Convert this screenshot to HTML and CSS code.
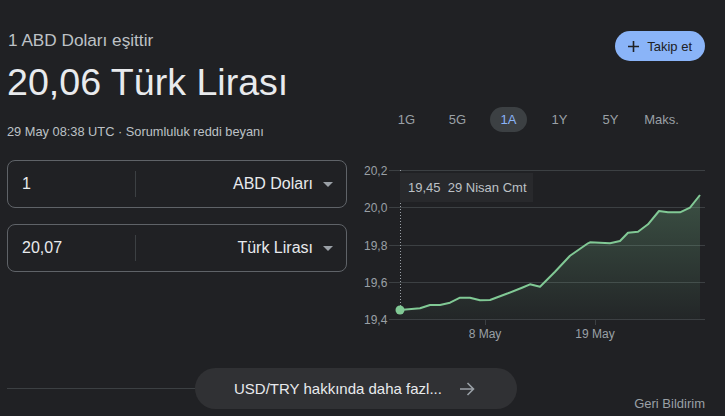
FILE: index.html
```html
<!DOCTYPE html>
<html lang="tr">
<head>
<meta charset="utf-8">
<link rel="stylesheet" href="styles.css">
</head>
<body>
<div class="page">
  <div class="main">
    <div class="left">
      <div class="eq">1 ABD Doları eşittir</div>
      <div class="big">20,06 Türk Lirası</div>
      <div class="date">29 May 08:38 UTC · Sorumluluk reddi beyanı</div>
      <div class="box first">
        <div class="val">1</div>
        <div class="sel"><span>ABD Doları</span><i class="tri"></i></div>
      </div>
      <div class="box">
        <div class="val">20,07</div>
        <div class="sel"><span>Türk Lirası</span><i class="tri"></i></div>
      </div>
    </div>
    <div class="right">
      <button class="follow"><svg width="11" height="11" viewBox="0 0 11 11"><path d="M5.5 0v11M0 5.5h11" stroke="#202124" stroke-width="1.6"/></svg><span>Takip et</span></button>
      <div class="tabs">
        <span class="tab">1G</span>
        <span class="tab">5G</span>
        <span class="tab on"><b>1A</b></span>
        <span class="tab">1Y</span>
        <span class="tab">5Y</span>
        <span class="tab">Maks.</span>
      </div>
      <div class="chart">
        <svg width="370" height="190" viewBox="355 155 370 190">
          <defs>
            <linearGradient id="g" x1="0" y1="195" x2="0" y2="320" gradientUnits="userSpaceOnUse">
              <stop offset="0" stop-color="#81c995" stop-opacity="0.28"/>
              <stop offset="1" stop-color="#81c995" stop-opacity="0.03"/>
            </linearGradient>
          </defs>
          <g stroke="#3c4043" stroke-width="1">
            <line x1="389" y1="170.5" x2="705" y2="170.5"/>
            <line x1="389" y1="207.5" x2="705" y2="207.5"/>
            <line x1="389" y1="245.5" x2="705" y2="245.5"/>
            <line x1="389" y1="282.5" x2="705" y2="282.5"/>
            <line x1="389" y1="319.5" x2="705" y2="319.5"/>
            <line x1="485.5" y1="320" x2="485.5" y2="325"/>
            <line x1="595.5" y1="320" x2="595.5" y2="325"/>
          </g>
          <g class="ylab" fill="#9aa0a6">
            <text x="364" y="174.5">20,2</text>
            <text x="364" y="211.5">20,0</text>
            <text x="364" y="249.5">19,8</text>
            <text x="364" y="286.5">19,6</text>
            <text x="364" y="323.5">19,4</text>
            <text x="485" y="338" text-anchor="middle">8 May</text>
            <text x="595" y="338" text-anchor="middle">19 May</text>
          </g>
          <line x1="400.5" y1="170" x2="400.5" y2="310" stroke="#9aa0a6" stroke-width="1" stroke-dasharray="1 2"/>
          <polygon fill="url(#g)" points="400,310 420,308.3 430,305 440,305 450,302.7 460,297.7 470,297.7 480,300.3 490,300 508,293.3 522,287.7 530,284.3 540,286.7 555,271.7 570,255.7 588,243.3 590,242.3 610,243.3 620,241 628,232.7 638,231.7 648,224.3 659,211 668,212.3 680,212.3 690,207.7 700,195 700,319 400,319"/>
          <polyline fill="none" stroke="#81c995" stroke-width="2" stroke-linejoin="round" points="400,310 420,308.3 430,305 440,305 450,302.7 460,297.7 470,297.7 480,300.3 490,300 508,293.3 522,287.7 530,284.3 540,286.7 555,271.7 570,255.7 588,243.3 590,242.3 610,243.3 620,241 628,232.7 638,231.7 648,224.3 659,211 668,212.3 680,212.3 690,207.7 700,195"/>
          <circle cx="400" cy="310" r="4.5" fill="#81c995"/>
        </svg>
        <div class="tip">19,45&nbsp; 29 Nisan Cmt</div>
      </div>
    </div>
  </div>
  <div class="foot">
    <div class="rule"></div>
    <div class="more"><span>USD/TRY hakkında daha fazl...</span><svg width="16" height="14" viewBox="0 0 16 14"><path d="M1 7h13.5M8.5 1l6 6-6 6" fill="none" stroke="#9aa0a6" stroke-width="1.6"/></svg></div>
    <div class="endcol">
      <div class="line"></div>
      <div class="fb">Geri Bildirim</div>
    </div>
  </div>
</div>
</body>
</html>
```

FILE: styles.css
```css
html, body {
  margin: 0;
  padding: 0;
  background: #202124;
}
body {
  width: 725px;
  height: 416px;
  overflow: hidden;
  font-family: "Liberation Sans", Arial, sans-serif;
  color: #e8eaed;
}
.page {
  padding: 0 0 0 7px;
}
.main {
  display: grid;
  grid-template-columns: 340px 370px;
  column-gap: 8px;
}
.left {
  display: flex;
  flex-direction: column;
}
.eq {
  margin-top: 30px;
  font-size: 17.2px;
  line-height: 20px;
  color: #bdc1c6;
  padding-left: 1px;
}
.big {
  margin-top: 10px;
  font-size: 37.6px;
  line-height: 44px;
  color: #e8eaed;
}
.date {
  margin-top: 20px;
  font-size: 12.8px;
  line-height: 16px;
  color: #bdc1c6;
}
.box {
  margin-top: 16px;
  height: 48px;
  box-sizing: border-box;
  border: 1px solid #5f6368;
  border-radius: 8px;
  display: flex;
  align-items: center;
}
.box.first {
  margin-top: 20px;
}
.val {
  width: 128px;
  box-sizing: border-box;
  padding-left: 14px;
  font-size: 16px;
  border-right: 1px solid #3c4043;
  height: 26px;
  line-height: 26px;
}
.sel {
  flex: 1;
  display: flex;
  justify-content: flex-end;
  align-items: center;
  padding-right: 13px;
  font-size: 16px;
  color: #e8eaed;
}
.tri {
  display: block;
  width: 0;
  height: 0;
  margin-left: 10px;
  border-left: 5px solid transparent;
  border-right: 5px solid transparent;
  border-top: 5px solid #9aa0a6;
}
.right {
  display: flex;
  flex-direction: column;
}
.follow {
  align-self: flex-end;
  margin-top: 31px;
  margin-right: 20px;
  height: 30px;
  border: 0;
  border-radius: 15px;
  background: #8ab4f8;
  color: #202124;
  font-family: "Liberation Sans", Arial, sans-serif;
  font-size: 13px;
  padding: 0 13px 0 13px;
  display: flex;
  align-items: center;
  gap: 8px;
}
.tabs {
  margin-top: 46px;
  padding-left: 26px;
  display: flex;
  height: 25px;
}
.tab {
  width: 51px;
  display: flex;
  justify-content: center;
  align-items: center;
  font-size: 13px;
  color: #9aa0a6;
}
.tab b {
  font-weight: normal;
  width: 37px;
  height: 25px;
  line-height: 25px;
  text-align: center;
  border-radius: 12.5px;
  background: #3c4043;
  color: #8ab4f8;
}
.chart {
  position: relative;
  margin-top: 23px;
  height: 190px;
}
.chart svg {
  display: block;
}
.ylab {
  font-family: "Liberation Sans", Arial, sans-serif;
  font-size: 12px;
}
.tip {
  position: absolute;
  left: 45px;
  top: 18px;
  width: 133px;
  height: 29px;
  line-height: 29px;
  box-sizing: border-box;
  padding-left: 8px;
  background: #28292c;
  color: #bdc1c6;
  font-size: 13px;
}
.foot {
  margin-top: 23px;
  margin-right: 20px;
  display: flex;
  height: 41px;
}
.rule {
  align-self: center;
  width: 188px;
  height: 1px;
  background: #3c4043;
  margin-top: -1px;
}
.more {
  width: 322px;
  height: 41px;
  box-sizing: border-box;
  border-radius: 20.5px;
  background: #303134;
  padding-left: 39px;
  display: flex;
  align-items: center;
  font-size: 15px;
  color: #e8eaed;
}
.more svg {
  margin-left: 17px;
}
.endcol {
  flex: 1;
  display: flex;
  flex-direction: column;
  padding-top: 20px;
}
.line {
  height: 1px;
  background: #3c4043;
}
.fb {
  margin-top: 9px;
  text-align: right;
  font-size: 13px;
  line-height: 14px;
  color: #9aa0a6;
}
```
